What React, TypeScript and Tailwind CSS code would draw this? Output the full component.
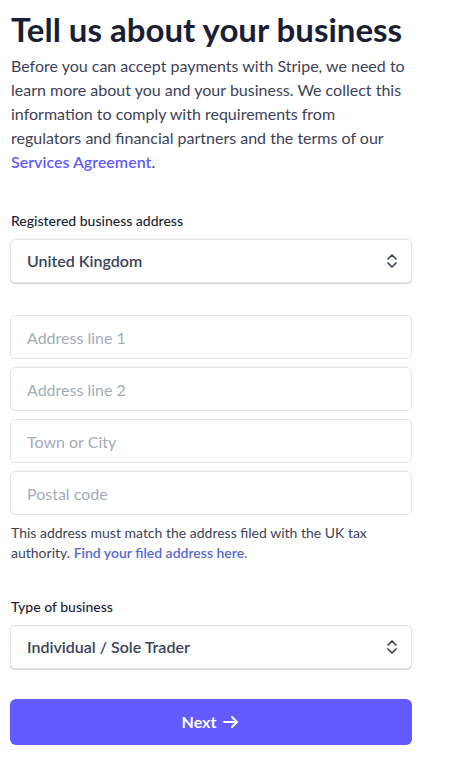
import React from 'react'

function Chevrons() {
  return (
    <svg width="12" height="18" viewBox="0 0 12 18" fill="none" className="text-[#3c4257]">
      <path d="M2 7l4-4 4 4" stroke="currentColor" strokeWidth="1.7" strokeLinecap="round" strokeLinejoin="round" />
      <path d="M2 11l4 4 4-4" stroke="currentColor" strokeWidth="1.7" strokeLinecap="round" strokeLinejoin="round" />
    </svg>
  )
}

function SelectBox({ value }: { value: string }) {
  return (
    <div className="flex h-[44px] items-center justify-between rounded-[5px] border border-[#e3e5ea] bg-white pl-[16px] pr-[13px] shadow-[0_1px_1px_rgba(0,0,0,0.12),0_1px_2px_rgba(60,66,87,0.08)]">
      <span className="text-[16px] font-semibold text-[#3c4257]">{value}</span>
      <Chevrons />
    </div>
  )
}

function TextInput({ placeholder }: { placeholder: string }) {
  return (
    <input
      placeholder={placeholder}
      className="h-[44px] w-full rounded-[5px] border border-[#e3e5ea] bg-white px-[16px] text-[16px] text-[#3c4257] outline-none placeholder:text-[#a3acb9]"
    />
  )
}

export default function App() {
  return (
    <div className="min-h-screen bg-white font-['Lato',sans-serif]">
      <div className="w-[412px] pl-[10px] pt-[7px]">
        <h1 className="pl-[1px] text-[33px] font-bold leading-[44px] text-[#1a1f36]">Tell us about your business</h1>
        <p className="mt-[3px] pl-[1px] text-[16px] leading-[24px] text-[#3c4257]">
          Before you can accept payments with Stripe, we need to
          <br />
          learn more about you and your business. We collect this
          <br />
          information to comply with requirements from
          <br />
          regulators and financial partners and the terms of our
          <br />
          <a className="font-semibold text-[#635bff]">Services Agreement</a>.
        </p>

        <div className="mt-[37px]">
          <label className="block pl-[1px] text-[14px] font-medium leading-[20px] text-[#1a1f36]">
            Registered business address
          </label>
          <div className="mt-[8px]">
            <SelectBox value="United Kingdom" />
          </div>
        </div>

        <div className="mt-[32px] flex flex-col gap-[8px]">
          <TextInput placeholder="Address line 1" />
          <TextInput placeholder="Address line 2" />
          <TextInput placeholder="Town or City" />
          <TextInput placeholder="Postal code" />
        </div>
        <p className="mt-[8px] pl-[1px] text-[14px] leading-[20px] text-[#3c4257]">
          This address must match the address filed with the UK tax
          <br />
          authority. <a className="font-semibold text-[#5469d4]">Find your filed address here.</a>
        </p>

        <div className="mt-[34px]">
          <label className="block pl-[1px] text-[14px] font-medium leading-[20px] text-[#1a1f36]">Type of business</label>
          <div className="mt-[8px]">
            <SelectBox value="Individual / Sole Trader" />
          </div>
        </div>

        <button className="mt-[30px] flex h-[46px] w-full items-center justify-center gap-[6px] rounded-[6px] bg-[#635bff] text-[16px] font-bold text-white">
          Next
          <svg width="18" height="18" viewBox="0 0 18 18" fill="none">
            <path d="M2 9h13M10 4l5 5-5 5" stroke="white" strokeWidth="2" strokeLinecap="round" strokeLinejoin="round" />
          </svg>
        </button>
      </div>
    </div>
  )
}
